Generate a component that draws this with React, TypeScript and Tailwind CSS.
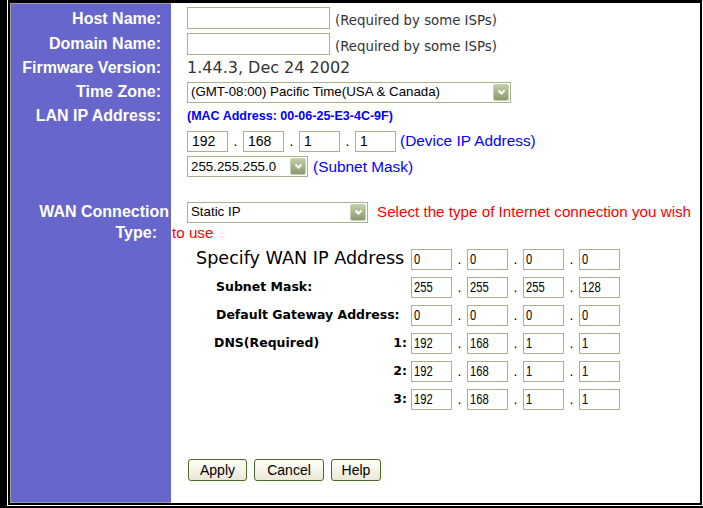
import React from "react";

const inputBox =
  "h-[21px] border border-[#a5b38f] bg-white flex items-center text-black shrink-0";

function Chevron() {
  return (
    <svg width="9" height="7" viewBox="0 0 9 7">
      <path d="M1.5 1.5 L4.5 4.5 L7.5 1.5" stroke="white" strokeWidth="2" fill="none" />
    </svg>
  );
}

function Sel({ w, text }: { w: string; text: string }) {
  return (
    <div className={`flex items-center h-[21px] border border-[#a5b38f] bg-white shrink-0 ${w}`}>
      <span className="flex-1 pl-[3px] text-[13.3px] text-black leading-none whitespace-nowrap overflow-hidden">
        {text}
      </span>
      <span className="w-[16px] h-[17px] mr-[1px] border border-[#c7d0b2] rounded-[2px] bg-gradient-to-b from-[#c2cdaa] to-[#8a9b6c] flex items-center justify-center">
        <Chevron />
      </span>
    </div>
  );
}

function IP({ vals, narrow }: { vals: string[]; narrow?: boolean }) {
  return (
    <div className="flex items-stretch">
      {vals.map((v, i) => (
        <React.Fragment key={i}>
          {i > 0 && (
            <span className="w-[15px] flex items-end justify-center text-[14px] leading-none pb-[4px] text-black">
              .
            </span>
          )}
          {narrow ? (
            <div className={`${inputBox} w-[41px] pl-[2px] text-[14px] overflow-hidden`}>
              <span className="inline-block scale-x-[0.8] origin-left leading-none">{v}</span>
            </div>
          ) : (
            <div className={`${inputBox} w-[41px] pl-[4px] text-[14px]`}>{v}</div>
          )}
        </React.Fragment>
      ))}
    </div>
  );
}

function Row({
  h,
  label,
  labelCls,
  rightCls,
  first,
  children,
}: {
  h: string;
  label?: React.ReactNode;
  labelCls?: string;
  rightCls?: string;
  first?: boolean;
  children?: React.ReactNode;
}) {
  return (
    <div className={`flex shrink-0 ${h}`}>
      <div
        className={`w-[161px] shrink-0 bg-[#6666cc] border-l border-[#9c9c9c] flex items-center justify-end text-white font-bold text-[16px] leading-none whitespace-nowrap ${
          first ? "border-t" : ""
        } ${labelCls ?? "pr-[10px]"}`}
      >
        {label}
      </div>
      <div className={`flex-1 flex items-center ${rightCls ?? "pl-[16px]"}`}>{children}</div>
    </div>
  );
}

function WanRow({
  left,
  vals,
}: {
  left: React.ReactNode;
  vals: string[];
}) {
  return (
    <Row h="h-[28px]" rightCls="pl-0">
      <div className="w-[240px] shrink-0 flex items-center h-full">{left}</div>
      <IP vals={vals} narrow />
    </Row>
  );
}

const sub = "font-['DejaVu_Sans',sans-serif] font-bold text-[12.5px] text-black leading-none";

function Btn({ w, children }: { w: string; children: React.ReactNode }) {
  return (
    <div
      className={`h-[22px] ${w} border border-[#4b6a24] rounded-[3px] bg-gradient-to-b from-[#fffffa] to-[#ebe8d6] flex items-center justify-center text-[14px] text-black leading-none`}
    >
      {children}
    </div>
  );
}

export default function App() {
  return (
    <div className="w-[703px] h-[508px] bg-black overflow-hidden font-['Liberation_Sans',Arial,sans-serif]">
      <div className="ml-[7px] w-[696px] h-[506px] border-l border-r border-b border-white">
        <div className="h-full border-l-2 border-r-2 border-b-2 border-t-[3px] border-black bg-white flex flex-col">
          <Row h="h-[30px]" label="Host Name:" first>
            <div className={`${inputBox} w-[143px] h-[22px]`} />
            <span className="ml-[5px] mt-[5px] text-[13.3px] text-[#333] font-['DejaVu_Sans',sans-serif] leading-none whitespace-nowrap">
              (Required by some ISPs)
            </span>
          </Row>
          <Row h="h-[22px]" label="Domain Name:">
            <div className={`${inputBox} w-[143px] h-[22px]`} />
            <span className="ml-[5px] mt-[5px] text-[13.3px] text-[#333] font-['DejaVu_Sans',sans-serif] leading-none whitespace-nowrap">
              (Required by some ISPs)
            </span>
          </Row>
          <Row h="h-[26px]" label="Firmware Version:">
            <span className="text-[16px] text-[#333] font-['DejaVu_Sans',sans-serif] leading-none whitespace-nowrap">
              1.44.3, Dec 24 2002
            </span>
          </Row>
          <Row h="h-[22px]" label="Time Zone:">
            <Sel w="w-[324px]" text="(GMT-08:00) Pacific Time(USA & Canada)" />
          </Row>
          <Row h="h-[26px]" label="LAN IP Address:">
            <span className="text-[12.5px] font-bold text-[#0000ff] leading-none whitespace-nowrap">
              (MAC Address: 00-06-25-E3-4C-9F)
            </span>
          </Row>
          <Row h="h-[24px]">
            <IP vals={["192", "168", "1", "1"]} />
            <span className="ml-[4px] text-[15.4px] text-[#0000ff] leading-none whitespace-nowrap">
              (Device IP Address)
            </span>
          </Row>
          <Row h="h-[27px]">
            <Sel w="w-[121px]" text="255.255.255.0" />
            <span className="ml-[5px] text-[15.4px] text-[#0000ff] leading-none whitespace-nowrap">
              (Subnet Mask)
            </span>
          </Row>
          <Row h="h-[21px]" />
          <Row h="h-[22px]" label="WAN Connection" labelCls="pr-[2px]">
            <Sel w="w-[181px]" text="Static IP" />
            <span className="ml-[9px] text-[15.2px] text-[#ff0000] leading-none whitespace-nowrap">
              Select the type of Internet connection you wish
            </span>
          </Row>
          <Row h="h-[20px]" label="Type:" labelCls="pr-[14px]" rightCls="pl-[1px]">
            <span className="text-[15.2px] text-[#ff0000] leading-none whitespace-nowrap">to use</span>
          </Row>
          <Row h="h-[2px]" />
          <WanRow
            left={
              <span className="pl-[25px] text-[17.6px] text-black font-['DejaVu_Sans',sans-serif] leading-none whitespace-nowrap">
                Specify WAN IP Address
              </span>
            }
            vals={["0", "0", "0", "0"]}
          />
          <WanRow left={<span className={`pl-[45px] ${sub}`}>Subnet Mask:</span>} vals={["255", "255", "255", "128"]} />
          <WanRow
            left={<span className={`pl-[45px] whitespace-nowrap ${sub}`}>Default Gateway Address:</span>}
            vals={["0", "0", "0", "0"]}
          />
          <WanRow
            left={
              <div className="flex w-full justify-between items-center pl-[43px] pr-[4px]">
                <span className={sub}>DNS(Required)</span>
                <span className={sub}>1:</span>
              </div>
            }
            vals={["192", "168", "1", "1"]}
          />
          <WanRow
            left={
              <div className="flex w-full justify-end pr-[4px]">
                <span className={sub}>2:</span>
              </div>
            }
            vals={["192", "168", "1", "1"]}
          />
          <WanRow
            left={
              <div className="flex w-full justify-end pr-[4px]">
                <span className={sub}>3:</span>
              </div>
            }
            vals={["192", "168", "1", "1"]}
          />
          <Row h="h-[46px]" />
          <Row h="h-[22px]" rightCls="pl-[17px] gap-[7px]">
            <Btn w="w-[59px]">Apply</Btn>
            <Btn w="w-[70px]">Cancel</Btn>
            <Btn w="w-[50px]">Help</Btn>
          </Row>
          <div className="flex flex-1">
            <div className="w-[161px] shrink-0 bg-[#6666cc] border-l border-b border-[#9c9c9c]" />
            <div className="flex-1" />
          </div>
        </div>
      </div>
    </div>
  );
}
